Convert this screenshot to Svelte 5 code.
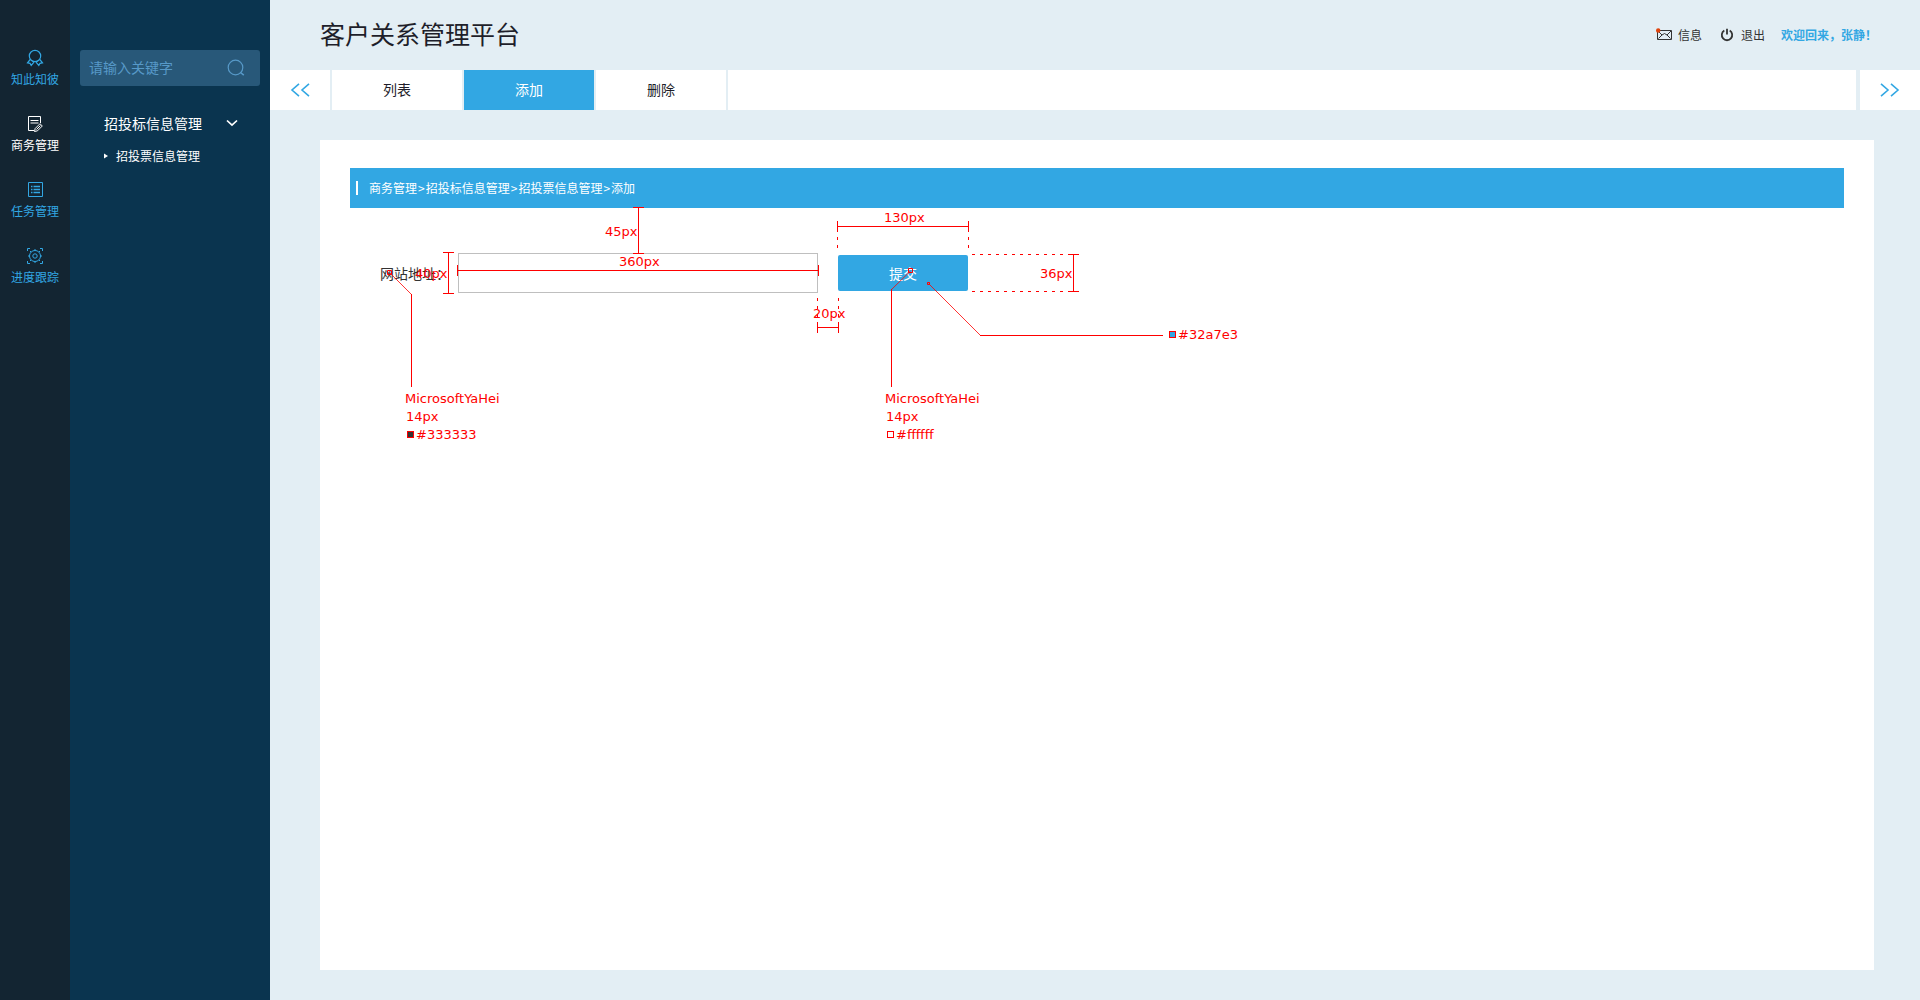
<script>
  const modules = [
    { id: 'insight', label: '知此知彼' },
    { id: 'business', label: '商务管理' },
    { id: 'tasks', label: '任务管理' },
    { id: 'progress', label: '进度跟踪' }
  ];
  const tabs = ['列表', '添加', '删除'];
  const crumbs = ['商务管理', '招投标信息管理', '招投票信息管理', '添加'];

  let activeModule = $state('business');
  let activeTab = $state('添加');
  let keyword = $state('');
  let address = $state('');
</script>

<div class="app">
  <nav class="modules" aria-label="模块">
    {#each modules as item (item.id)}
      <button type="button" class="module" class:active={item.id === activeModule} onclick={() => (activeModule = item.id)}>
        <svg width="18" height="18" viewBox="0 0 18 18" fill="none" stroke="currentColor" aria-hidden="true">
          {#if item.id === 'insight'}
            <circle cx="9" cy="7" r="5.700" stroke-width="1.200" />
            <path d="M4.200 10.500L1.500 13.800L4 14.300L5.200 16.500L8 13.200M13.800 10.500L16.500 13.800L14 14.300L12.800 16.500L10 13.200" stroke-width="1.200" />
          {:else if item.id === 'business'}
            <path d="M8 15.500H2.500V1.500H14.500V8" />
            <path d="M4.500 5.500H12.500M4.500 8H12.500" />
            <path d="M8.500 16.500L9.200 13.500L14 8.700L16.300 11L11.500 15.800L8.500 16.500ZM10.500 14.500L14.500 10.500" />
          {:else if item.id === 'tasks'}
            <path d="M2.500 1.500H16.500V15.500H2.500Z" />
            <path d="M5 5.500H6.500M5 8.500H6.500M5 11.500H6.500M7.500 5.500H14M7.500 8.500H14M7.500 11.500H14" stroke-width="1.500" />
          {:else}
            <path d="M1.500 4V1.500H4M14 1.500H16.500V4M16.500 14V16.500H14M4 16.500H1.500V14" />
            <circle cx="9" cy="9" r="5.500" />
            <circle cx="9" cy="9" r="2.200" />
            <path d="M9 2V3.500M9 14.500V16M2 9H3.500M14.500 9H16M4 4L5 5M13 13L14 14M14 4L13 5M4 14L5 13" />
          {/if}
        </svg>
        <span>{item.label}</span>
      </button>
    {/each}
  </nav>

  <aside class="side">
    <form class="search" role="search" onsubmit={(e) => e.preventDefault()}>
      <input type="text" aria-label="关键字" placeholder="请输入关键字" bind:value={keyword} />
      <button type="submit" aria-label="搜索">
        <svg width="18" height="18" viewBox="0 0 18 18" fill="none" stroke="currentColor" stroke-width="1.200" aria-hidden="true">
          <circle cx="8.500" cy="8.500" r="7.300" />
          <path d="M13.500 13.500L16.800 16.200" stroke-width="1.600" />
        </svg>
      </button>
    </form>
    <button type="button" class="group" aria-expanded="true">
      <span>招投标信息管理</span>
      <svg width="12" height="8" viewBox="0 0 12 8" fill="none" stroke="currentColor" stroke-width="1.700" aria-hidden="true">
        <path d="M1 1.500L6 6.200L11 1.500" />
      </svg>
    </button>
    <a class="leaf" href="#tender">
      <svg width="4" height="6" viewBox="0 0 4 6" fill="currentColor" aria-hidden="true"><path d="M0 0.500L4 3L0 5.500Z" /></svg>
      <span>招投票信息管理</span>
    </a>
  </aside>

  <div class="workspace">
    <header class="top">
      <h1>客户关系管理平台</h1>
      <div class="account">
        <a href="#messages">
          <svg width="16" height="14" viewBox="0 0 16 14" fill="none" stroke="currentColor" aria-hidden="true">
            <path d="M1.500 2.500H15.500V11.500H1.500ZM2 3L6 7L8.500 5.500L11 7L15 3M6 7L2.500 10.500M11 7L14.500 10.500" />
            <circle cx="2.200" cy="2.500" r="2.200" fill="#e0430c" stroke="none" />
          </svg>
          <span>信息</span>
        </a>
        <a class="exit" href="#logout">
          <svg width="14" height="14" viewBox="0 0 14 14" fill="none" stroke="currentColor" stroke-width="1.800" aria-hidden="true">
            <path d="M4.300 2.600A5.200 5.200 0 1 0 9.700 2.600M7 0.800V6.500" />
          </svg>
          <span>退出</span>
        </a>
        <strong>欢迎回来，张静！</strong>
      </div>
    </header>

    <nav class="tabs" aria-label="操作">
      <button type="button" class="step" aria-label="向前">
        <svg width="20" height="14" viewBox="0 0 20 14" fill="none" stroke="currentColor" stroke-width="1.600" aria-hidden="true">
          <path d="M9 0.800L2 7L9 13.200M19 0.800L12 7L19 13.200" />
        </svg>
      </button>
      {#each tabs as tab (tab)}
        <button type="button" class="tab" class:current={tab === activeTab} onclick={() => (activeTab = tab)}>{tab}</button>
      {/each}
      <div class="filler"></div>
      <button type="button" class="step last" aria-label="向后">
        <svg width="20" height="14" viewBox="0 0 20 14" fill="none" stroke="currentColor" stroke-width="1.600" aria-hidden="true">
          <path d="M1 0.800L8 7L1 13.200M11 0.800L18 7L11 13.200" />
        </svg>
      </button>
    </nav>

    <main class="card">
      <div class="crumbs">
        <i></i>
        <p>{#each crumbs as crumb, n (crumb)}{#if n > 0}<span>&gt;</span>{/if}{crumb}{/each}</p>
      </div>

      <section class="panel">
        <form class="entry" onsubmit={(e) => e.preventDefault()}>
          <label for="site-address">网站地址：</label>
          <input id="site-address" type="text" bind:value={address} />
          <button type="submit">提交</button>
        </form>

        <svg class="notes" width="900" height="240" viewBox="0 0 900 240">
          <g class="rules">
            <!-- spacing above the field -->
            <path d="M288.500 0V45M283 -0.500H294M283 45.500H294" />
            <!-- field height and width -->
            <path d="M98.500 44V86M93 44.500H104M93 85.500H104" />
            <path d="M107.500 57V68M108 62.500H468M468.500 57V68" />
            <!-- button width -->
            <path d="M487.500 13V24M488 18.500H618M618.500 13V24" />
            <path class="dash" d="M487.500 29V42M618.500 29V42" />
            <!-- gap between field and button -->
            <path d="M467.500 114V125M468 119.500H488M488.500 114V125" />
            <path class="dash" d="M467.500 90V112M488.500 90V112" />
            <!-- button height -->
            <path d="M723.500 46V84M718 46.500H729M718 83.500H729" />
            <path class="dash" d="M622 46.500H718M622 83.500H718" />
            <!-- leaders -->
            <path d="M37.500 62.500H41.500V66.500H37.500ZM61.500 86V179" />
            <path d="M558.500 60.500H562.500V64.500H558.500ZM541.500 81V179" />
            <path d="M577.500 74.500H579.500V76.500H577.500ZM630 127.500H813" />
            <path class="thin" d="M40 65L61.500 86.500M560.500 63L541.500 81.500M579 76L630.500 127.500" />
          </g>
          <g class="swatches">
            <rect x="57.500" y="223.500" width="6" height="6" fill="#333333" />
            <rect x="537.500" y="223.500" width="6" height="6" fill="#ffffff" />
            <rect x="819.500" y="123.500" width="6" height="6" fill="#32a7e3" />
          </g>
          <g class="captions">
            <text x="255" y="28">45px</text>
            <text x="269" y="58">360px</text>
            <text x="65" y="70">40px</text>
            <text x="534" y="14">130px</text>
            <text x="463" y="110">20px</text>
            <text x="690" y="70">36px</text>
            <text x="55" y="195">MicrosoftYaHei</text>
            <text x="56" y="213">14px</text>
            <text x="66" y="231">#333333</text>
            <text x="535" y="195">MicrosoftYaHei</text>
            <text x="536" y="213">14px</text>
            <text x="546" y="231">#ffffff</text>
            <text x="828" y="131">#32a7e3</text>
          </g>
        </svg>
      </section>
    </main>
  </div>
</div>

<style>
  :global(body) {
    margin: 0;
    font-family: 'Noto Sans CJK SC', 'Noto Sans', sans-serif;
    font-size: 14px;
  }
  button,
  input {
    box-sizing: border-box;
    margin: 0;
    padding: 0;
    border: 0;
    background: none;
    font: inherit;
    color: inherit;
  }
  button {
    cursor: pointer;
  }
  a {
    color: inherit;
    text-decoration: none;
  }
  svg {
    display: block;
    flex: none;
  }
  .app {
    display: flex;
    min-height: 100vh;
    background: #e3eef4;
  }

  .modules {
    display: flex;
    flex: none;
    flex-direction: column;
    gap: 27px;
    box-sizing: border-box;
    width: 70px;
    padding-top: 49px;
    background: #132532;
    color: #32a7e3;
  }
  .module {
    display: flex;
    flex-direction: column;
    align-items: center;
    gap: 3px;
    font-size: 12px;
    line-height: 18px;
  }
  .module.active {
    color: #fff;
  }

  .side {
    flex: none;
    box-sizing: border-box;
    width: 200px;
    padding: 50px 10px;
    background: #0a344f;
    color: #fff;
  }
  .search {
    display: flex;
    align-items: center;
    height: 36px;
    padding: 0 15px 0 9px;
    border-radius: 3px;
    background: #285879;
    color: #5799c8;
  }
  .search input {
    flex: 1;
    min-width: 0;
    height: 36px;
    padding-bottom: 2px;
    outline: none;
  }
  .search input::placeholder {
    color: #5799c8;
    opacity: 1;
  }
  .group {
    display: flex;
    align-items: center;
    justify-content: space-between;
    width: 100%;
    margin-top: 27px;
    padding: 0 22px 0 24px;
    line-height: 20px;
  }
  .leaf {
    display: flex;
    align-items: center;
    gap: 8px;
    margin-top: 14px;
    padding-left: 24px;
    font-size: 12px;
    line-height: 18px;
  }

  .workspace {
    display: flex;
    flex: 1;
    flex-direction: column;
    min-width: 0;
  }
  .top {
    display: flex;
    align-items: center;
    justify-content: space-between;
    height: 70px;
    padding: 0 43px 0 50px;
  }
  h1 {
    margin: 0;
    padding-bottom: 4px;
    color: #1e1e2a;
    font-size: 25px;
    font-weight: 400;
    line-height: 36px;
  }
  .account {
    display: flex;
    align-items: center;
    color: #333;
    font-size: 12px;
    line-height: 18px;
  }
  .account a {
    display: flex;
    align-items: center;
    gap: 6px;
    margin-right: 18px;
  }
  .account .exit {
    gap: 7px;
    margin-right: 16px;
  }
  .account strong {
    color: #32a7e3;
    font-weight: 700;
  }

  .tabs {
    display: flex;
    gap: 2px;
    height: 40px;
  }
  .tabs button,
  .filler {
    background: #fff;
  }
  .filler {
    flex: 1;
  }
  .step {
    display: flex;
    align-items: center;
    justify-content: center;
    width: 60px;
    color: #32a7e3;
  }
  .last {
    margin-left: 2px;
  }
  .tab {
    width: 130px;
    padding-bottom: 2px;
    color: #1e1e2a;
  }
  .tabs .current {
    background: #32a7e3;
    color: #fff;
  }

  .card {
    flex: 1;
    margin: 30px 46px 30px 50px;
    padding: 28px 30px;
    background: #fff;
  }
  .crumbs {
    display: flex;
    align-items: center;
    gap: 11px;
    height: 40px;
    padding-left: 6px;
    background: #32a7e3;
    color: #fff;
    font-size: 12px;
  }
  .crumbs i {
    width: 2px;
    height: 14px;
    background: #fff;
  }
  .crumbs p {
    margin: 0;
    padding-bottom: 2px;
  }
  .crumbs span {
    padding: 0 1px;
  }

  .panel {
    position: relative;
    padding: 45px 30px;
  }
  .entry {
    display: flex;
    align-items: center;
    color: #333;
  }
  .entry input {
    width: 360px;
    height: 40px;
    margin: 0 20px 0 8px;
    padding: 0 10px;
    border: 1px solid #bfbfbf;
    background: #fff;
  }
  .entry button {
    width: 130px;
    height: 36px;
    border-radius: 2px;
    background: #32a7e3;
    color: #fff;
  }

  .notes {
    position: absolute;
    top: 0;
    left: 0;
    overflow: visible;
    pointer-events: none;
  }
  .rules,
  .swatches {
    stroke: #f00;
  }
  .rules {
    fill: none;
  }
  .dash {
    stroke-dasharray: 3 5;
  }
  .thin {
    stroke-width: 0.800;
  }
  .captions {
    fill: #f00;
    font-family: 'DejaVu Sans', sans-serif;
    font-size: 13px;
  }
</style>
